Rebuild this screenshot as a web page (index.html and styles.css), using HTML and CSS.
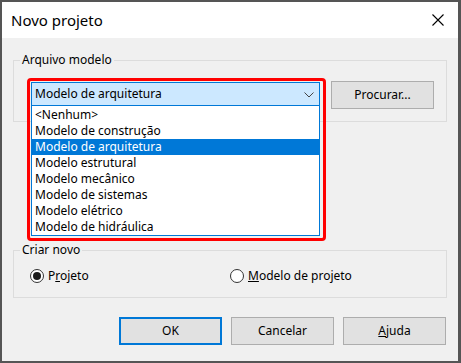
FILE: index.html
```html
<!DOCTYPE html>
<html lang="pt">
<head>
<meta charset="utf-8">
<title>Novo projeto</title>
<link rel="stylesheet" href="styles.css">
</head>
<body>
<div class="dialog">
  <div class="titlebar">
    <span class="title">Novo projeto</span>
    <svg class="close" width="12" height="12" viewBox="0 0 12 12"><path d="M0.5 0.5 L11.5 11.5 M11.5 0.5 L0.5 11.5" stroke="#000" stroke-width="1.1" fill="none"/></svg>
  </div>
  <div class="content">
    <fieldset class="group group-file">
      <legend>Arquivo modelo</legend>
      <div class="file-row">
        <div class="combo-wrap">
          <div class="combo">
            <span>Modelo de arquitetura</span>
            <svg class="chev" width="10" height="6" viewBox="0 0 10 6"><path d="M0.5 0.5 L5 5 L9.5 0.5" stroke="#444" stroke-width="1" fill="none"/></svg>
          </div>
          <ul class="list">
            <li>&lt;Nenhum&gt;</li>
            <li>Modelo de construção</li>
            <li class="sel">Modelo de arquitetura</li>
            <li>Modelo estrutural</li>
            <li>Modelo mecânico</li>
            <li>Modelo de sistemas</li>
            <li>Modelo elétrico</li>
            <li>Modelo de hidráulica</li>
          </ul>
          <div class="highlight"></div>
        </div>
        <button class="btn btn-browse">Procurar...</button>
      </div>
    </fieldset>
    <fieldset class="group group-new">
      <legend>Criar novo</legend>
      <div class="radio-row">
        <label class="radio radio-project"><span class="dot on"></span><span>P<u>r</u>ojeto</span></label>
        <label class="radio"><span class="dot"></span><span><u>M</u>odelo de projeto</span></label>
      </div>
    </fieldset>
    <div class="actions">
      <button class="btn btn-default">OK</button>
      <button class="btn">Cancelar</button>
      <button class="btn"><u>A</u>juda</button>
    </div>
  </div>
</div>
</body>
</html>
```

FILE: styles.css
```css
* { box-sizing: border-box; }
html, body { margin: 0; padding: 0; background: #f0f0f0; }
body {
  font-family: "Noto Sans", "Open Sans", sans-serif;
  font-size: 12px;
  color: #000;
}
.dialog {
  width: 461px;
  height: 363px;
  border-style: solid;
  border-color: #555555;
  border-width: 2px 3px 2px 2px;
  background: #f0f0f0;
  display: flex;
  flex-direction: column;
}
.titlebar {
  height: 36px;
  background: #ffffff;
  display: flex;
  align-items: center;
  justify-content: space-between;
  padding: 0 14px 0 9px;
}
.title {
  font-size: 15px;
  line-height: 20px;
}
.close { display: block; }
.content {
  padding: 14px 11px 0 11px;
  display: flex;
  flex-direction: column;
}
.group {
  margin: 0;
  padding: 0;
  border: 1px solid #dcdcdc;
  min-width: 0;
}
.group legend {
  margin-left: 6px;
  padding: 0 2px;
  line-height: 16px;
  height: 16px;
}
.file-row {
  display: flex;
  align-items: flex-start;
  padding: 0 0 12px 17px;
  gap: 11px;
}
.combo-wrap {
  position: relative;
  width: 289px;
  margin-top: 14px;
}
.combo {
  height: 24px;
  background: #cce8ff;
  border: 1px solid #0078d7;
  display: flex;
  align-items: center;
  justify-content: space-between;
  padding: 0 5px 0 3px;
  line-height: 16px;
}
.chev { display: block; margin-top: 1px; }
.list {
  position: absolute;
  top: 24px;
  left: 0;
  width: 289px;
  margin: 0;
  padding: 1px 0 0 0;
  list-style: none;
  background: #ffffff;
  border: 1px solid #0078d7;
  border-top: none;
  z-index: 2;
}
.list li {
  height: 16px;
  line-height: 16px;
  padding-left: 3px;
  white-space: nowrap;
}
.list li.sel {
  background: #0078d7;
  color: #ffffff;
}
.highlight {
  position: absolute;
  top: -4px;
  left: -4px;
  width: 299px;
  height: 163px;
  border: 3px solid #ff0000;
  border-radius: 4px;
  z-index: 3;
  pointer-events: none;
}
.btn {
  font: inherit;
  color: #000;
  width: 103px;
  height: 28px;
  background: #e1e1e1;
  border: 1px solid #adadad;
  padding: 0;
  margin: 0;
  line-height: 16px;
}
.btn-browse { margin-top: 13px; }
.btn-default { border: 2px solid #0078d7; }
.group-new { margin-top: 120px; }
.radio-row {
  display: flex;
  align-items: center;
  height: 16px;
  margin: 10px 0 13px 16px;
}
.radio {
  display: flex;
  align-items: center;
  gap: 4px;
  line-height: 16px;
}
.radio-project { width: 200px; }
.dot {
  width: 14px;
  height: 14px;
  border: 1px solid #333333;
  border-radius: 50%;
  background: #ffffff;
  display: flex;
  align-items: center;
  justify-content: center;
}
.dot.on::after {
  content: "";
  width: 8px;
  height: 8px;
  border-radius: 50%;
  background: #1a1a1a;
}
.actions {
  display: flex;
  justify-content: flex-end;
  gap: 9px;
  margin-top: 19px;
  padding-right: 1px;
}
```
